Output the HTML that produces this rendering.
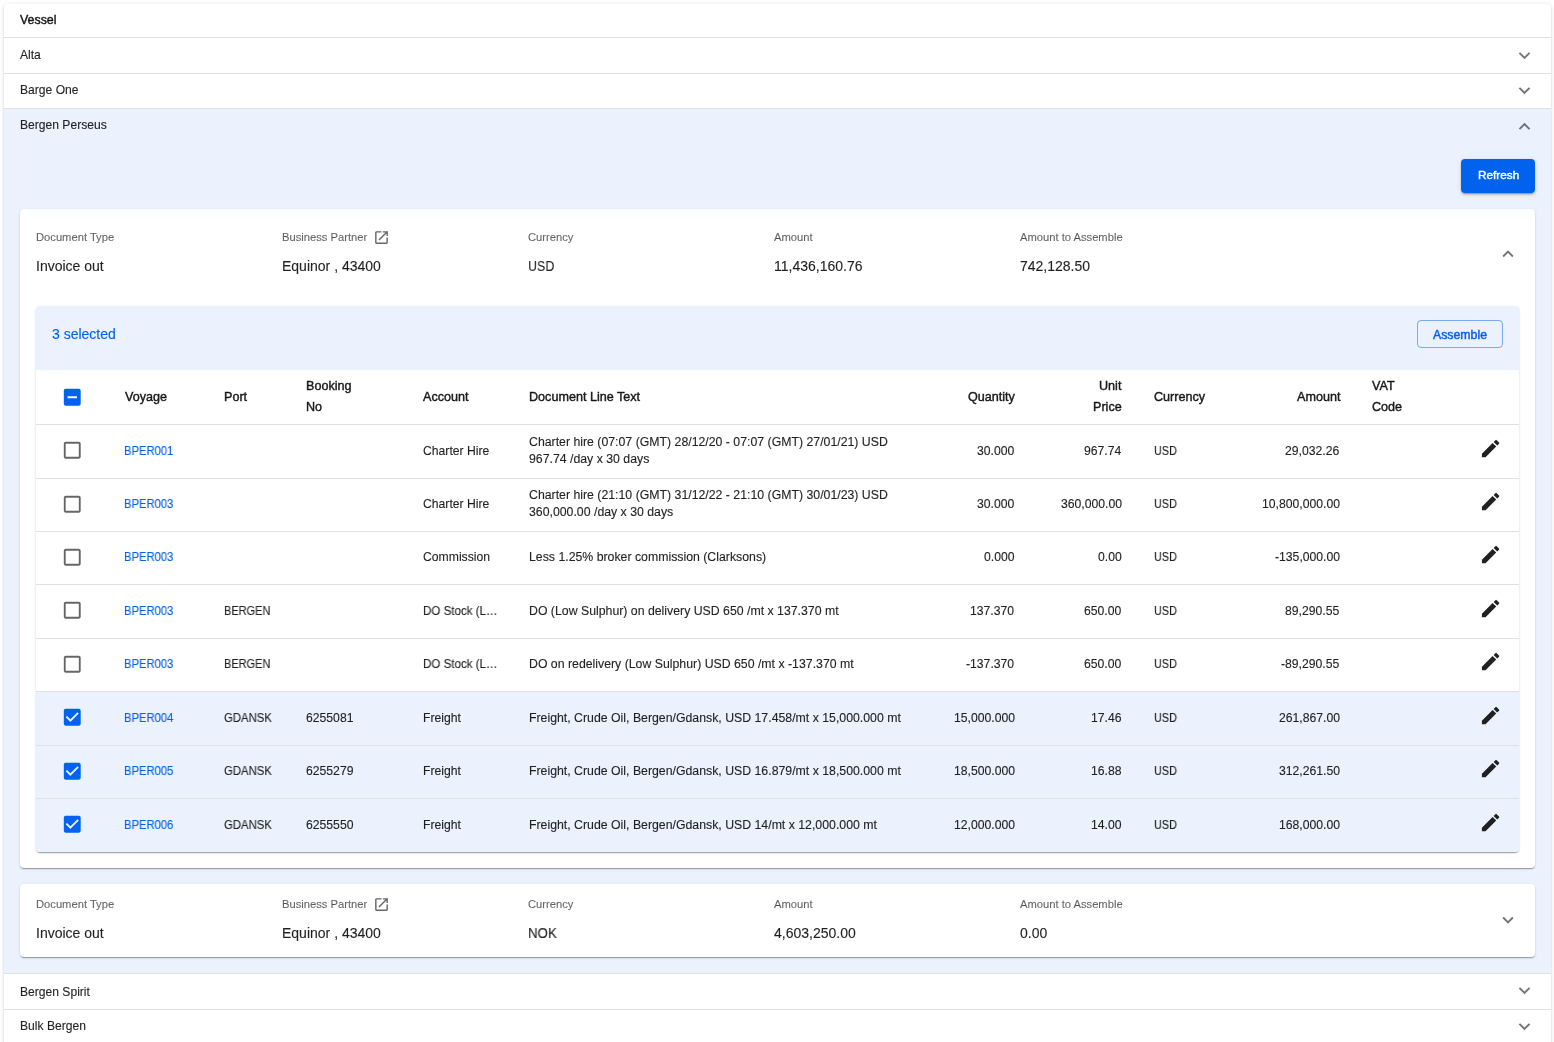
<!DOCTYPE html>
<html><head><meta charset="utf-8"><title>Vessel</title>
<style>
html,body{margin:0;padding:0;}
body{width:1554px;height:1042px;position:relative;overflow:hidden;background:#fff;font-family:"Liberation Sans",sans-serif;}
.t{position:absolute;white-space:nowrap;line-height:1;will-change:transform;-webkit-text-stroke:0.12px currentColor;}
</style></head><body>
<div style="position:absolute;left:4px;top:4px;width:1547px;height:1100px;background:#fff;border-radius:4px;box-shadow:0px 2px 1px -1px rgba(0,0,0,0.2),0px 1px 1px 0px rgba(0,0,0,0.16),0px 1px 4px 0px rgba(0,0,0,0.16);"></div>
<div class="t" style="top:14.20px;font-size:12.4px;color:rgba(0,0,0,0.87);-webkit-text-stroke:0.42px currentColor;left:20px;">Vessel</div>
<div style="position:absolute;left:4px;top:37px;width:1547px;height:1px;background:#e0e0e0"></div>
<div class="t" style="top:49.46px;font-size:12.1px;color:rgba(0,0,0,0.87);left:20px;">Alta</div>
<svg style="position:absolute;left:1512.75px;top:43.5px" width="23" height="23" viewBox="0 0 24 24"><path fill="rgba(0,0,0,0.54)" d="M16.59 8.59 12 13.17 7.41 8.59 6 10l6 6 6-6z"/></svg>
<div style="position:absolute;left:4px;top:73px;width:1547px;height:1px;background:#e0e0e0"></div>
<div class="t" style="top:84.46px;font-size:12.1px;color:rgba(0,0,0,0.87);left:20px;">Barge One</div>
<svg style="position:absolute;left:1512.75px;top:79.4px" width="23" height="23" viewBox="0 0 24 24"><path fill="rgba(0,0,0,0.54)" d="M16.59 8.59 12 13.17 7.41 8.59 6 10l6 6 6-6z"/></svg>
<div style="position:absolute;left:4px;top:108px;width:1547px;height:1px;background:#e0e0e0"></div>
<div style="position:absolute;left:4px;top:109px;width:1547px;height:864px;background:#ebf2fe"></div>
<div class="t" style="top:119.46px;font-size:12.1px;color:rgba(0,0,0,0.87);left:20px;">Bergen Perseus</div>
<svg style="position:absolute;left:1512.75px;top:114.7px" width="23" height="23" viewBox="0 0 24 24"><path fill="rgba(0,0,0,0.54)" d="m12 8-6 6 1.41 1.41L12 10.83l4.59 4.58L18 14z"/></svg>
<div style="position:absolute;left:1461px;top:159px;width:74px;height:34px;background:#0062ed;border-radius:4px;box-shadow:0px 3px 1px -2px rgba(0,0,0,0.2),0px 2px 2px 0px rgba(0,0,0,0.14),0px 1px 5px 0px rgba(0,0,0,0.12);"></div>
<div class="t" style="top:169.51px;font-size:11.8px;color:#fff;-webkit-text-stroke:0.42px currentColor;left:1477.5px;">Refresh</div>
<div style="position:absolute;left:20px;top:209px;width:1515px;height:659px;background:#fff;border-radius:4px;box-shadow:0px 2px 1px -1px rgba(0,0,0,0.2),0px 1px 1px 0px rgba(0,0,0,0.14),0px 1px 3px 0px rgba(0,0,0,0.12);"></div>
<div class="t" style="top:231.52px;font-size:11.2px;color:rgba(0,0,0,0.6);left:36px;">Document Type</div>
<div class="t" style="top:259.35px;font-size:14px;color:rgba(0,0,0,0.87);left:36px;">Invoice out</div>
<div class="t" style="top:231.52px;font-size:11.2px;color:rgba(0,0,0,0.6);left:282px;">Business Partner</div>
<div class="t" style="top:259.35px;font-size:14px;color:rgba(0,0,0,0.87);left:282px;">Equinor , 43400</div>
<div class="t" style="top:231.52px;font-size:11.2px;color:rgba(0,0,0,0.6);left:528px;">Currency</div>
<div class="t" style="top:259.35px;font-size:14px;color:rgba(0,0,0,0.87);left:528px;transform:scaleX(0.89);transform-origin:left center;">USD</div>
<div class="t" style="top:231.52px;font-size:11.2px;color:rgba(0,0,0,0.6);left:774px;">Amount</div>
<div class="t" style="top:259.35px;font-size:14px;color:rgba(0,0,0,0.87);left:774px;">11,436,160.76</div>
<div class="t" style="top:231.52px;font-size:11.2px;color:rgba(0,0,0,0.6);left:1020px;">Amount to Assemble</div>
<div class="t" style="top:259.35px;font-size:14px;color:rgba(0,0,0,0.87);left:1020px;">742,128.50</div>
<svg style="position:absolute;left:373px;top:229px" width="17" height="17" viewBox="0 0 24 24"><path fill="rgba(0,0,0,0.6)" d="M19 19H5V5h7V3H5c-1.11 0-2 .9-2 2v14c0 1.1.89 2 2 2h14c1.1 0 2-.9 2-2v-7h-2v7zM14 3v2h3.59l-9.83 9.83 1.41 1.41L19 6.41V10h2V3h-7z"/></svg>
<svg style="position:absolute;left:1497px;top:242.5px" width="22" height="22" viewBox="0 0 24 24"><path fill="rgba(0,0,0,0.54)" d="m12 8-6 6 1.41 1.41L12 10.83l4.59 4.58L18 14z"/></svg>
<div style="position:absolute;left:36px;top:306px;width:1483px;height:546px;background:#fff;border-radius:4px;overflow:hidden;box-shadow:0px 2px 1px -1px rgba(0,0,0,0.2),0px 1px 1px 0px rgba(0,0,0,0.14),0px 1px 3px 0px rgba(0,0,0,0.12);"></div>
<div style="position:absolute;left:36px;top:306px;width:1483px;height:64px;background:#ebf2fe;border-radius:4px 4px 0 0"></div>
<div class="t" style="top:327.15px;font-size:14px;color:#0062ed;left:52px;">3 selected</div>
<div style="position:absolute;left:1417px;top:320px;width:86px;height:28px;border:1px solid rgba(0,98,237,0.5);border-radius:4px;box-sizing:border-box;"></div>
<div class="t" style="top:328.89px;font-size:12.3px;color:#0062ed;-webkit-text-stroke:0.42px currentColor;left:1433px;">Assemble</div>
<svg style="position:absolute;left:61.25px;top:385.8px" width="22.5" height="22.5" viewBox="0 0 24 24"><path fill="#0062ed" d="M19 3H5c-1.1 0-2 .9-2 2v14c0 1.1.9 2 2 2h14c1.1 0 2-.9 2-2V5c0-1.1-.9-2-2-2zm-2 10H7v-2h10v2z"/></svg>
<div class="t" style="top:391.13px;font-size:12.6px;color:rgba(0,0,0,0.87);-webkit-text-stroke:0.42px currentColor;left:124.5px;">Voyage</div>
<div class="t" style="top:391.13px;font-size:12.6px;color:rgba(0,0,0,0.87);-webkit-text-stroke:0.42px currentColor;left:224px;">Port</div>
<div class="t" style="top:391.13px;font-size:12.6px;color:rgba(0,0,0,0.87);-webkit-text-stroke:0.42px currentColor;left:423px;">Account</div>
<div class="t" style="top:391.13px;font-size:12.6px;color:rgba(0,0,0,0.87);-webkit-text-stroke:0.42px currentColor;right:539.30px;">Quantity</div>
<div class="t" style="top:391.13px;font-size:12.6px;color:rgba(0,0,0,0.87);-webkit-text-stroke:0.42px currentColor;left:1153.7px;">Currency</div>
<div class="t" style="top:391.13px;font-size:12.6px;color:rgba(0,0,0,0.87);-webkit-text-stroke:0.42px currentColor;right:213.70px;">Amount</div>
<div class="t" style="top:380.33px;font-size:12.6px;color:rgba(0,0,0,0.87);-webkit-text-stroke:0.42px currentColor;left:306px;">Booking</div>
<div class="t" style="top:401.13px;font-size:12.6px;color:rgba(0,0,0,0.87);-webkit-text-stroke:0.42px currentColor;left:306px;">No</div>
<div class="t" style="top:391.13px;font-size:12.6px;color:rgba(0,0,0,0.87);-webkit-text-stroke:0.42px currentColor;left:528.5px;">Document Line Text</div>
<div class="t" style="top:380.33px;font-size:12.6px;color:rgba(0,0,0,0.87);-webkit-text-stroke:0.42px currentColor;right:432.40px;">Unit</div>
<div class="t" style="top:401.13px;font-size:12.6px;color:rgba(0,0,0,0.87);-webkit-text-stroke:0.42px currentColor;right:432.40px;">Price</div>
<div class="t" style="top:380.33px;font-size:12.6px;color:rgba(0,0,0,0.87);-webkit-text-stroke:0.42px currentColor;left:1372px;">VAT</div>
<div class="t" style="top:401.13px;font-size:12.6px;color:rgba(0,0,0,0.87);-webkit-text-stroke:0.42px currentColor;left:1372px;">Code</div>
<div style="position:absolute;left:36px;top:424px;width:1483px;height:1px;background:#e0e0e0"></div>
<svg style="position:absolute;left:61.25px;top:439.45px" width="22.5" height="22.5" viewBox="0 0 24 24"><path fill="rgba(0,0,0,0.6)" d="M19 5v14H5V5h14m0-2H5c-1.11 0-2 .9-2 2v14c0 1.1.89 2 2 2h14c1.1 0 2-.9 2-2V5c0-1.1-.9-2-2-2z"/></svg>
<div class="t" style="top:444.87px;font-size:12.2px;color:#0062ed;left:123.9px;transform:scaleX(0.92);transform-origin:left center;">BPER001</div>
<div class="t" style="top:444.87px;font-size:12.2px;color:rgba(0,0,0,0.87);left:423px;">Charter Hire</div>
<div class="t" style="top:435.79px;font-size:12.3px;color:rgba(0,0,0,0.87);left:528.5px;">Charter hire (07:07 (GMT) 28/12/20 - 07:07 (GMT) 27/01/21) USD</div>
<div class="t" style="top:452.79px;font-size:12.3px;color:rgba(0,0,0,0.87);left:528.5px;">967.74 /day x 30 days</div>
<div class="t" style="top:444.87px;font-size:12.2px;color:rgba(0,0,0,0.87);right:539.50px;">30.000</div>
<div class="t" style="top:444.87px;font-size:12.2px;color:rgba(0,0,0,0.87);right:432.50px;">967.74</div>
<div class="t" style="top:444.87px;font-size:12.2px;color:rgba(0,0,0,0.87);left:1154.2px;transform:scaleX(0.89);transform-origin:left center;">USD</div>
<div class="t" style="top:444.87px;font-size:12.2px;color:rgba(0,0,0,0.87);right:214.40px;">29,032.26</div>
<svg style="position:absolute;left:1478.6px;top:436.5px" width="23.2" height="23.2" viewBox="0 0 24 24"><path fill="rgba(0,0,0,0.87)" d="M3 17.25V21h3.75L17.81 9.94l-3.75-3.75L3 17.25zM20.71 7.04c.39-.39.39-1.02 0-1.41l-2.34-2.34a.9959.9959 0 0 0-1.41 0l-1.83 1.83 3.75 3.75 1.83-1.83z"/></svg>
<div style="position:absolute;left:36px;top:478px;width:1483px;height:1px;background:#e0e0e0"></div>
<svg style="position:absolute;left:61.25px;top:492.95px" width="22.5" height="22.5" viewBox="0 0 24 24"><path fill="rgba(0,0,0,0.6)" d="M19 5v14H5V5h14m0-2H5c-1.11 0-2 .9-2 2v14c0 1.1.89 2 2 2h14c1.1 0 2-.9 2-2V5c0-1.1-.9-2-2-2z"/></svg>
<div class="t" style="top:498.37px;font-size:12.2px;color:#0062ed;left:123.9px;transform:scaleX(0.92);transform-origin:left center;">BPER003</div>
<div class="t" style="top:498.37px;font-size:12.2px;color:rgba(0,0,0,0.87);left:423px;">Charter Hire</div>
<div class="t" style="top:489.29px;font-size:12.3px;color:rgba(0,0,0,0.87);left:528.5px;">Charter hire (21:10 (GMT) 31/12/22 - 21:10 (GMT) 30/01/23) USD</div>
<div class="t" style="top:506.29px;font-size:12.3px;color:rgba(0,0,0,0.87);left:528.5px;">360,000.00 /day x 30 days</div>
<div class="t" style="top:498.37px;font-size:12.2px;color:rgba(0,0,0,0.87);right:539.50px;">30.000</div>
<div class="t" style="top:498.37px;font-size:12.2px;color:rgba(0,0,0,0.87);right:432.50px;">360,000.00</div>
<div class="t" style="top:498.37px;font-size:12.2px;color:rgba(0,0,0,0.87);left:1154.2px;transform:scaleX(0.89);transform-origin:left center;">USD</div>
<div class="t" style="top:498.37px;font-size:12.2px;color:rgba(0,0,0,0.87);right:214.40px;">10,800,000.00</div>
<svg style="position:absolute;left:1478.6px;top:490.0px" width="23.2" height="23.2" viewBox="0 0 24 24"><path fill="rgba(0,0,0,0.87)" d="M3 17.25V21h3.75L17.81 9.94l-3.75-3.75L3 17.25zM20.71 7.04c.39-.39.39-1.02 0-1.41l-2.34-2.34a.9959.9959 0 0 0-1.41 0l-1.83 1.83 3.75 3.75 1.83-1.83z"/></svg>
<div style="position:absolute;left:36px;top:531px;width:1483px;height:1px;background:#e0e0e0"></div>
<svg style="position:absolute;left:61.25px;top:545.95px" width="22.5" height="22.5" viewBox="0 0 24 24"><path fill="rgba(0,0,0,0.6)" d="M19 5v14H5V5h14m0-2H5c-1.11 0-2 .9-2 2v14c0 1.1.89 2 2 2h14c1.1 0 2-.9 2-2V5c0-1.1-.9-2-2-2z"/></svg>
<div class="t" style="top:551.37px;font-size:12.2px;color:#0062ed;left:123.9px;transform:scaleX(0.92);transform-origin:left center;">BPER003</div>
<div class="t" style="top:551.37px;font-size:12.2px;color:rgba(0,0,0,0.87);left:423px;">Commission</div>
<div class="t" style="top:551.29px;font-size:12.3px;color:rgba(0,0,0,0.87);left:528.5px;">Less 1.25% broker commission (Clarksons)</div>
<div class="t" style="top:551.37px;font-size:12.2px;color:rgba(0,0,0,0.87);right:539.50px;">0.000</div>
<div class="t" style="top:551.37px;font-size:12.2px;color:rgba(0,0,0,0.87);right:432.50px;">0.00</div>
<div class="t" style="top:551.37px;font-size:12.2px;color:rgba(0,0,0,0.87);left:1154.2px;transform:scaleX(0.89);transform-origin:left center;">USD</div>
<div class="t" style="top:551.37px;font-size:12.2px;color:rgba(0,0,0,0.87);right:214.40px;">-135,000.00</div>
<svg style="position:absolute;left:1478.6px;top:543.0px" width="23.2" height="23.2" viewBox="0 0 24 24"><path fill="rgba(0,0,0,0.87)" d="M3 17.25V21h3.75L17.81 9.94l-3.75-3.75L3 17.25zM20.71 7.04c.39-.39.39-1.02 0-1.41l-2.34-2.34a.9959.9959 0 0 0-1.41 0l-1.83 1.83 3.75 3.75 1.83-1.83z"/></svg>
<div style="position:absolute;left:36px;top:584px;width:1483px;height:1px;background:#e0e0e0"></div>
<svg style="position:absolute;left:61.25px;top:599.45px" width="22.5" height="22.5" viewBox="0 0 24 24"><path fill="rgba(0,0,0,0.6)" d="M19 5v14H5V5h14m0-2H5c-1.11 0-2 .9-2 2v14c0 1.1.89 2 2 2h14c1.1 0 2-.9 2-2V5c0-1.1-.9-2-2-2z"/></svg>
<div class="t" style="top:604.87px;font-size:12.2px;color:#0062ed;left:123.9px;transform:scaleX(0.92);transform-origin:left center;">BPER003</div>
<div class="t" style="top:604.87px;font-size:12.2px;color:rgba(0,0,0,0.87);left:224.2px;transform:scaleX(0.9);transform-origin:left center;">BERGEN</div>
<div class="t" style="top:604.87px;font-size:12.2px;color:rgba(0,0,0,0.87);left:423px;transform:scaleX(0.95);transform-origin:left center;">DO Stock (L…</div>
<div class="t" style="top:604.79px;font-size:12.3px;color:rgba(0,0,0,0.87);left:528.5px;">DO (Low Sulphur) on delivery USD 650 /mt x 137.370 mt</div>
<div class="t" style="top:604.87px;font-size:12.2px;color:rgba(0,0,0,0.87);right:539.50px;">137.370</div>
<div class="t" style="top:604.87px;font-size:12.2px;color:rgba(0,0,0,0.87);right:432.50px;">650.00</div>
<div class="t" style="top:604.87px;font-size:12.2px;color:rgba(0,0,0,0.87);left:1154.2px;transform:scaleX(0.89);transform-origin:left center;">USD</div>
<div class="t" style="top:604.87px;font-size:12.2px;color:rgba(0,0,0,0.87);right:214.40px;">89,290.55</div>
<svg style="position:absolute;left:1478.6px;top:596.5px" width="23.2" height="23.2" viewBox="0 0 24 24"><path fill="rgba(0,0,0,0.87)" d="M3 17.25V21h3.75L17.81 9.94l-3.75-3.75L3 17.25zM20.71 7.04c.39-.39.39-1.02 0-1.41l-2.34-2.34a.9959.9959 0 0 0-1.41 0l-1.83 1.83 3.75 3.75 1.83-1.83z"/></svg>
<div style="position:absolute;left:36px;top:638px;width:1483px;height:1px;background:#e0e0e0"></div>
<svg style="position:absolute;left:61.25px;top:652.95px" width="22.5" height="22.5" viewBox="0 0 24 24"><path fill="rgba(0,0,0,0.6)" d="M19 5v14H5V5h14m0-2H5c-1.11 0-2 .9-2 2v14c0 1.1.89 2 2 2h14c1.1 0 2-.9 2-2V5c0-1.1-.9-2-2-2z"/></svg>
<div class="t" style="top:658.37px;font-size:12.2px;color:#0062ed;left:123.9px;transform:scaleX(0.92);transform-origin:left center;">BPER003</div>
<div class="t" style="top:658.37px;font-size:12.2px;color:rgba(0,0,0,0.87);left:224.2px;transform:scaleX(0.9);transform-origin:left center;">BERGEN</div>
<div class="t" style="top:658.37px;font-size:12.2px;color:rgba(0,0,0,0.87);left:423px;transform:scaleX(0.95);transform-origin:left center;">DO Stock (L…</div>
<div class="t" style="top:658.29px;font-size:12.3px;color:rgba(0,0,0,0.87);left:528.5px;">DO on redelivery (Low Sulphur) USD 650 /mt x -137.370 mt</div>
<div class="t" style="top:658.37px;font-size:12.2px;color:rgba(0,0,0,0.87);right:539.50px;">-137.370</div>
<div class="t" style="top:658.37px;font-size:12.2px;color:rgba(0,0,0,0.87);right:432.50px;">650.00</div>
<div class="t" style="top:658.37px;font-size:12.2px;color:rgba(0,0,0,0.87);left:1154.2px;transform:scaleX(0.89);transform-origin:left center;">USD</div>
<div class="t" style="top:658.37px;font-size:12.2px;color:rgba(0,0,0,0.87);right:214.40px;">-89,290.55</div>
<svg style="position:absolute;left:1478.6px;top:650.0px" width="23.2" height="23.2" viewBox="0 0 24 24"><path fill="rgba(0,0,0,0.87)" d="M3 17.25V21h3.75L17.81 9.94l-3.75-3.75L3 17.25zM20.71 7.04c.39-.39.39-1.02 0-1.41l-2.34-2.34a.9959.9959 0 0 0-1.41 0l-1.83 1.83 3.75 3.75 1.83-1.83z"/></svg>
<div style="position:absolute;left:36px;top:691px;width:1483px;height:1px;background:#e0e0e0"></div>
<div style="position:absolute;left:36px;top:692px;width:1483px;height:53px;background:#ebf2fe;"></div>
<svg style="position:absolute;left:61.25px;top:706.45px" width="22.5" height="22.5" viewBox="0 0 24 24"><path fill="#0062ed" d="M19 3H5c-1.11 0-2 .9-2 2v14c0 1.1.89 2 2 2h14c1.11 0 2-.9 2-2V5c0-1.1-.89-2-2-2zm-9 14l-5-5 1.41-1.41L10 14.17l7.59-7.59L19 8l-9 9z"/></svg>
<div class="t" style="top:711.87px;font-size:12.2px;color:#0062ed;left:123.9px;transform:scaleX(0.92);transform-origin:left center;">BPER004</div>
<div class="t" style="top:711.87px;font-size:12.2px;color:rgba(0,0,0,0.87);left:224.2px;transform:scaleX(0.93);transform-origin:left center;">GDANSK</div>
<div class="t" style="top:711.87px;font-size:12.2px;color:rgba(0,0,0,0.87);left:305.6px;">6255081</div>
<div class="t" style="top:711.87px;font-size:12.2px;color:rgba(0,0,0,0.87);left:423px;">Freight</div>
<div class="t" style="top:711.79px;font-size:12.3px;color:rgba(0,0,0,0.87);left:528.5px;">Freight, Crude Oil, Bergen/Gdansk, USD 17.458/mt x 15,000.000 mt</div>
<div class="t" style="top:711.87px;font-size:12.2px;color:rgba(0,0,0,0.87);right:539.50px;">15,000.000</div>
<div class="t" style="top:711.87px;font-size:12.2px;color:rgba(0,0,0,0.87);right:432.50px;">17.46</div>
<div class="t" style="top:711.87px;font-size:12.2px;color:rgba(0,0,0,0.87);left:1154.2px;transform:scaleX(0.89);transform-origin:left center;">USD</div>
<div class="t" style="top:711.87px;font-size:12.2px;color:rgba(0,0,0,0.87);right:214.40px;">261,867.00</div>
<svg style="position:absolute;left:1478.6px;top:703.5px" width="23.2" height="23.2" viewBox="0 0 24 24"><path fill="rgba(0,0,0,0.87)" d="M3 17.25V21h3.75L17.81 9.94l-3.75-3.75L3 17.25zM20.71 7.04c.39-.39.39-1.02 0-1.41l-2.34-2.34a.9959.9959 0 0 0-1.41 0l-1.83 1.83 3.75 3.75 1.83-1.83z"/></svg>
<div style="position:absolute;left:36px;top:745px;width:1483px;height:1px;background:#e0e0e0"></div>
<div style="position:absolute;left:36px;top:746px;width:1483px;height:52px;background:#ebf2fe;"></div>
<svg style="position:absolute;left:61.25px;top:759.95px" width="22.5" height="22.5" viewBox="0 0 24 24"><path fill="#0062ed" d="M19 3H5c-1.11 0-2 .9-2 2v14c0 1.1.89 2 2 2h14c1.11 0 2-.9 2-2V5c0-1.1-.89-2-2-2zm-9 14l-5-5 1.41-1.41L10 14.17l7.59-7.59L19 8l-9 9z"/></svg>
<div class="t" style="top:765.37px;font-size:12.2px;color:#0062ed;left:123.9px;transform:scaleX(0.92);transform-origin:left center;">BPER005</div>
<div class="t" style="top:765.37px;font-size:12.2px;color:rgba(0,0,0,0.87);left:224.2px;transform:scaleX(0.93);transform-origin:left center;">GDANSK</div>
<div class="t" style="top:765.37px;font-size:12.2px;color:rgba(0,0,0,0.87);left:305.6px;">6255279</div>
<div class="t" style="top:765.37px;font-size:12.2px;color:rgba(0,0,0,0.87);left:423px;">Freight</div>
<div class="t" style="top:765.29px;font-size:12.3px;color:rgba(0,0,0,0.87);left:528.5px;">Freight, Crude Oil, Bergen/Gdansk, USD 16.879/mt x 18,500.000 mt</div>
<div class="t" style="top:765.37px;font-size:12.2px;color:rgba(0,0,0,0.87);right:539.50px;">18,500.000</div>
<div class="t" style="top:765.37px;font-size:12.2px;color:rgba(0,0,0,0.87);right:432.50px;">16.88</div>
<div class="t" style="top:765.37px;font-size:12.2px;color:rgba(0,0,0,0.87);left:1154.2px;transform:scaleX(0.89);transform-origin:left center;">USD</div>
<div class="t" style="top:765.37px;font-size:12.2px;color:rgba(0,0,0,0.87);right:214.40px;">312,261.50</div>
<svg style="position:absolute;left:1478.6px;top:757.0px" width="23.2" height="23.2" viewBox="0 0 24 24"><path fill="rgba(0,0,0,0.87)" d="M3 17.25V21h3.75L17.81 9.94l-3.75-3.75L3 17.25zM20.71 7.04c.39-.39.39-1.02 0-1.41l-2.34-2.34a.9959.9959 0 0 0-1.41 0l-1.83 1.83 3.75 3.75 1.83-1.83z"/></svg>
<div style="position:absolute;left:36px;top:798px;width:1483px;height:1px;background:#e0e0e0"></div>
<div style="position:absolute;left:36px;top:799px;width:1483px;height:53px;background:#ebf2fe;border-radius:0 0 4px 4px;"></div>
<svg style="position:absolute;left:61.25px;top:813.45px" width="22.5" height="22.5" viewBox="0 0 24 24"><path fill="#0062ed" d="M19 3H5c-1.11 0-2 .9-2 2v14c0 1.1.89 2 2 2h14c1.11 0 2-.9 2-2V5c0-1.1-.89-2-2-2zm-9 14l-5-5 1.41-1.41L10 14.17l7.59-7.59L19 8l-9 9z"/></svg>
<div class="t" style="top:818.87px;font-size:12.2px;color:#0062ed;left:123.9px;transform:scaleX(0.92);transform-origin:left center;">BPER006</div>
<div class="t" style="top:818.87px;font-size:12.2px;color:rgba(0,0,0,0.87);left:224.2px;transform:scaleX(0.93);transform-origin:left center;">GDANSK</div>
<div class="t" style="top:818.87px;font-size:12.2px;color:rgba(0,0,0,0.87);left:305.6px;">6255550</div>
<div class="t" style="top:818.87px;font-size:12.2px;color:rgba(0,0,0,0.87);left:423px;">Freight</div>
<div class="t" style="top:818.79px;font-size:12.3px;color:rgba(0,0,0,0.87);left:528.5px;">Freight, Crude Oil, Bergen/Gdansk, USD 14/mt x 12,000.000 mt</div>
<div class="t" style="top:818.87px;font-size:12.2px;color:rgba(0,0,0,0.87);right:539.50px;">12,000.000</div>
<div class="t" style="top:818.87px;font-size:12.2px;color:rgba(0,0,0,0.87);right:432.50px;">14.00</div>
<div class="t" style="top:818.87px;font-size:12.2px;color:rgba(0,0,0,0.87);left:1154.2px;transform:scaleX(0.89);transform-origin:left center;">USD</div>
<div class="t" style="top:818.87px;font-size:12.2px;color:rgba(0,0,0,0.87);right:214.40px;">168,000.00</div>
<svg style="position:absolute;left:1478.6px;top:810.5px" width="23.2" height="23.2" viewBox="0 0 24 24"><path fill="rgba(0,0,0,0.87)" d="M3 17.25V21h3.75L17.81 9.94l-3.75-3.75L3 17.25zM20.71 7.04c.39-.39.39-1.02 0-1.41l-2.34-2.34a.9959.9959 0 0 0-1.41 0l-1.83 1.83 3.75 3.75 1.83-1.83z"/></svg>
<div style="position:absolute;left:20px;top:884px;width:1515px;height:73px;background:#fff;border-radius:4px;box-shadow:0px 2px 1px -1px rgba(0,0,0,0.2),0px 1px 1px 0px rgba(0,0,0,0.14),0px 1px 3px 0px rgba(0,0,0,0.12);"></div>
<div class="t" style="top:898.52px;font-size:11.2px;color:rgba(0,0,0,0.6);left:36px;">Document Type</div>
<div class="t" style="top:926.35px;font-size:14px;color:rgba(0,0,0,0.87);left:36px;">Invoice out</div>
<div class="t" style="top:898.52px;font-size:11.2px;color:rgba(0,0,0,0.6);left:282px;">Business Partner</div>
<div class="t" style="top:926.35px;font-size:14px;color:rgba(0,0,0,0.87);left:282px;">Equinor , 43400</div>
<div class="t" style="top:898.52px;font-size:11.2px;color:rgba(0,0,0,0.6);left:528px;">Currency</div>
<div class="t" style="top:926.35px;font-size:14px;color:rgba(0,0,0,0.87);left:528px;transform:scaleX(0.95);transform-origin:left center;">NOK</div>
<div class="t" style="top:898.52px;font-size:11.2px;color:rgba(0,0,0,0.6);left:774px;">Amount</div>
<div class="t" style="top:926.35px;font-size:14px;color:rgba(0,0,0,0.87);left:774px;">4,603,250.00</div>
<div class="t" style="top:898.52px;font-size:11.2px;color:rgba(0,0,0,0.6);left:1020px;">Amount to Assemble</div>
<div class="t" style="top:926.35px;font-size:14px;color:rgba(0,0,0,0.87);left:1020px;">0.00</div>
<svg style="position:absolute;left:373px;top:896px" width="17" height="17" viewBox="0 0 24 24"><path fill="rgba(0,0,0,0.6)" d="M19 19H5V5h7V3H5c-1.11 0-2 .9-2 2v14c0 1.1.89 2 2 2h14c1.1 0 2-.9 2-2v-7h-2v7zM14 3v2h3.59l-9.83 9.83 1.41 1.41L19 6.41V10h2V3h-7z"/></svg>
<svg style="position:absolute;left:1496.5px;top:908.8px" width="22" height="22" viewBox="0 0 24 24"><path fill="rgba(0,0,0,0.54)" d="M16.59 8.59 12 13.17 7.41 8.59 6 10l6 6 6-6z"/></svg>
<div style="position:absolute;left:4px;top:973px;width:1547px;height:1px;background:#e0e0e0"></div>
<div class="t" style="top:985.66px;font-size:12.1px;color:rgba(0,0,0,0.87);left:20px;">Bergen Spirit</div>
<svg style="position:absolute;left:1512.75px;top:979.2px" width="23" height="23" viewBox="0 0 24 24"><path fill="rgba(0,0,0,0.54)" d="M16.59 8.59 12 13.17 7.41 8.59 6 10l6 6 6-6z"/></svg>
<div style="position:absolute;left:4px;top:1009px;width:1547px;height:1px;background:#e0e0e0"></div>
<div class="t" style="top:1020.46px;font-size:12.1px;color:rgba(0,0,0,0.87);left:20px;">Bulk Bergen</div>
<svg style="position:absolute;left:1512.75px;top:1015.2px" width="23" height="23" viewBox="0 0 24 24"><path fill="rgba(0,0,0,0.54)" d="M16.59 8.59 12 13.17 7.41 8.59 6 10l6 6 6-6z"/></svg>
</body></html>
